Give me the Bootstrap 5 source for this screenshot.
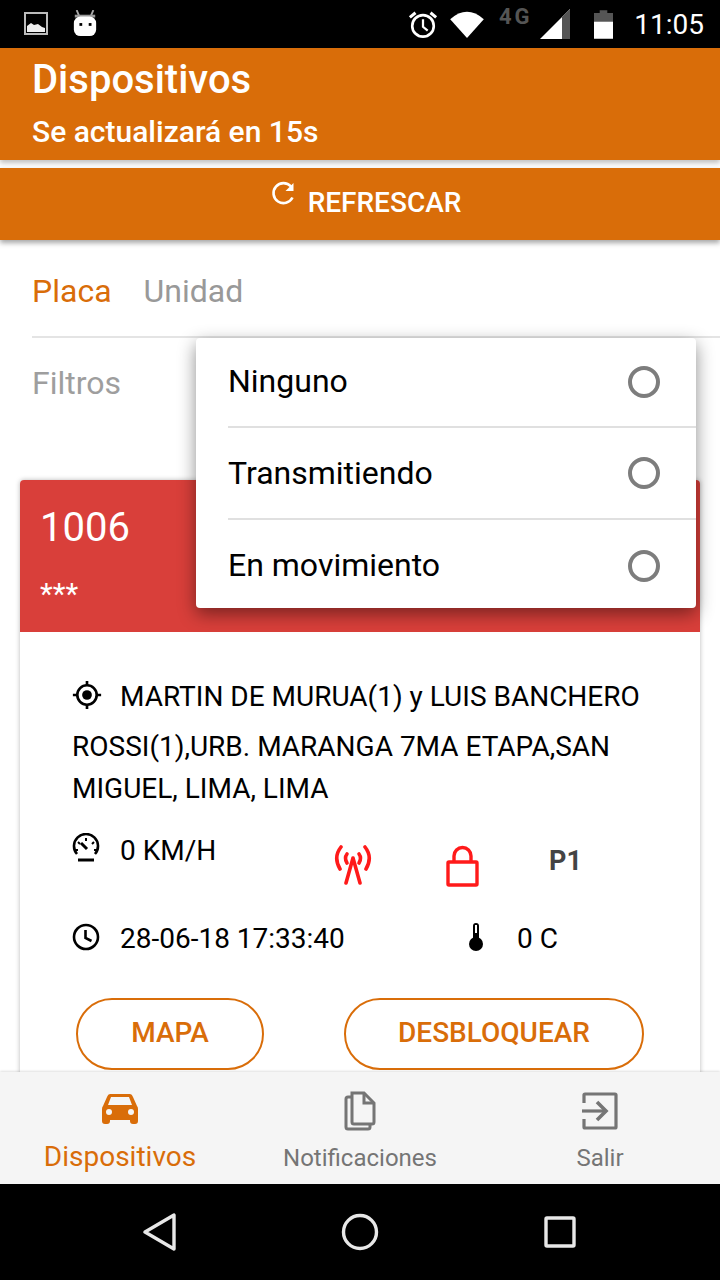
<!DOCTYPE html>
<html lang="es">
<head>
<meta charset="utf-8">
<title>Dispositivos</title>
<link href="https://cdn.jsdelivr.net/npm/bootstrap@5.3.0/dist/css/bootstrap.min.css" rel="stylesheet">
<style>
html,body{height:1280px;width:720px;overflow:hidden}
body{font-family:Roboto,sans-serif;background:#fff;color:#000}
.shell{height:1280px;position:relative}
.statusbar{height:48px;background:#000;color:#fff;padding:0 16px 0 24px;flex:none}
.st-droid{margin-left:24px}
.st-wifi{margin-left:12px}
.st-net{margin-left:15px}
.st-batt{margin-left:23px}
.clock{font-size:28px;line-height:48px;margin-left:21px;padding-top:2px}
.apphead{height:112px;background:#d96d09;color:#fff;padding:10px 32px 0;flex:none;box-shadow:0 3px 5px rgba(0,0,0,.25);position:relative;z-index:2}
.apphead h1{font-size:40px;line-height:44px;font-weight:500;margin:0 0 11px}
.apphead p{font-size:30px;line-height:38px;font-weight:500;margin:0}
.refresh{height:72px;margin-top:8px;background:#d96d09;color:#fff;font-size:28px;font-weight:500;flex:none;box-shadow:0 3px 5px rgba(0,0,0,.35);position:relative;z-index:2;border:0;border-radius:0;width:100%;padding:0}
.refresh:hover,.refresh:active{background:#d96d09;color:#fff}
.refresh span{margin-top:-2px}
.refresh-ico{margin:-20px 11px 0 12px}
.content{min-height:0;overflow:hidden;position:relative;background:#fff}
.segs{margin-left:32px;height:98px;border-bottom:2px solid #e4e4e4;gap:32px;font-size:32px;padding-top:6px}
.seg-on{color:#d96d09}
.seg-off{color:#999}
.filter-row{height:142px;padding:27px 0 0 32px;font-size:32px;color:#9e9e9e;line-height:36px}
.devcard{margin:0 20px;background:#fff;box-shadow:0 0 5px rgba(0,0,0,.28);border-radius:4px 4px 0 0;height:700px}
.devhead{height:152px;background:#d93f3a;color:#fff;border-radius:4px 4px 0 0;padding:24px 20px 0}
.devhead h2{font-size:40px;line-height:48px;font-weight:400;margin:0 0 28px}
.devhead p{font-size:29.5px;line-height:28px;margin:0}
.devbody{padding:44px 52px 0;font-size:28px;line-height:42px}
.addr{margin:0 0 17px}
.addr-first{line-height:42px;margin-bottom:8px;display:block}
.addr svg{margin:-7px 18px 0 0;vertical-align:middle}
.infor{height:82px}
.infor2{height:60px}
.ico-gap{width:48px;flex:none}
.c-speed{width:263px;flex:none;padding-top:3px}
.c-speed svg{margin-top:-6px}
.c-ant{width:112px;flex:none;padding-top:18px}
.c-ant svg{margin-left:-1px}
.c-lock{width:103px;flex:none;padding-top:18px}
.c-lock svg{margin-left:-1px}
.p1{font-weight:700;color:#444;font-size:27px;line-height:42px;padding-top:13px;margin-left:-1px}
.c-date{width:396px;flex:none}
.c-date svg{margin-top:-4px}
.thermo{margin:-4px 33px 0 0}
.actions{margin:29px -48px 0 4px;gap:80px}
.pill{height:72px;border:2px solid #d96d09;border-radius:36px;background:#fff;color:#d96d09;font-size:28px;font-weight:500;padding:0 0 2px;display:flex;align-items:center;justify-content:center}
.pill:hover{background:#fff;color:#d96d09;border-color:#d96d09}
.p-map{width:188px}
.p-unlock{width:300px}
.popmenu{position:absolute;left:196px;top:98px;width:500px;height:270px;background:#fff;border-radius:4px;box-shadow:0 6px 18px rgba(0,0,0,.45);z-index:5;padding:0 0 0 32px}
.popitem{height:92px;font-size:32px;border-bottom:2px solid #e0e0e0;padding-right:36px}
.popitem:first-child{height:90px}
.popitem:first-child>span:first-child,.popitem:last-child>span:first-child{margin-top:-2px}
.popitem:last-child{border:0;height:88px;padding-top:4px}
.ring{width:32px;height:32px;border:4px solid #7d7d7d;border-radius:50%;display:block}
.tabbar{height:112px;background:#f5f5f5;flex:none;position:relative;z-index:3;box-shadow:0 -1px 2px rgba(0,0,0,.12)}
.tabitem{width:240px;color:#757575;font-size:24px;line-height:30px;height:112px}
.tabitem span{margin-top:1px}
.tabitem.on{color:#d96d09;font-size:28px}
.tabitem.on span{margin-top:0}
.tabitem svg{display:block}
.tab-ico{height:70px}
.navbarx{height:96px;background:#000;flex:none}
.nav-side{width:320px}
.nav-mid{width:80px}
</style>
</head>
<body>
<div class="shell d-flex flex-column">
  <div class="statusbar d-flex align-items-center justify-content-between">
    <div class="d-flex align-items-center">
      <svg width="24" height="24" viewBox="0 0 24 24"><rect x="1" y="1" width="22" height="21" fill="none" stroke="#bbb" stroke-width="2"/><path d="M3 20V14l4-3 3 2 4-1 4 3 3 1v4z" fill="#eee"/></svg>
      <svg class="st-droid" width="26" height="28" viewBox="0 0 28 30"><path d="M5 0l3 7M23 0l-3 7" stroke="#aaa" stroke-width="2"/><path d="M3 5h22v3H3z" fill="#999"/><rect x="2" y="7" width="24" height="21" rx="7" fill="#fff"/><rect x="8" y="14" width="3" height="3" fill="#000"/><rect x="18" y="14" width="3" height="3" fill="#000"/></svg>
    </div>
    <div class="d-flex align-items-center">
      <svg width="30" height="30" viewBox="0 0 32 32" fill="none" stroke="#fff"><circle cx="16" cy="18" r="11.5" stroke-width="2.8"/><path d="M16 11v8l5 4" stroke-width="2.4"/><path d="M2 9l6-5M30 9l-6-5" stroke-width="3.2"/></svg>
      <svg class="st-wifi" width="34" height="28" viewBox="0 0 36 30"><path d="M0 10Q18-6 36 10L18 30z" fill="#fff"/></svg>
      <svg class="st-net" width="72" height="40" viewBox="0 0 72 40"><text x="0" y="20" font-family="Roboto,sans-serif" font-size="22" font-weight="700" letter-spacing="3" fill="#555">4G</text><path d="M41 35L71 5v30z" fill="#fff"/><path d="M63 13L71 5v30h-8z" fill="#555"/></svg>
      <svg class="st-batt" width="19" height="29" viewBox="0 0 20 30"><path d="M6 0h8v3h6v9H0V3h6z" fill="#555"/><rect y="12" width="20" height="18" fill="#fff"/></svg>
      <span class="clock">11:05</span>
    </div>
  </div>
  <header class="apphead">
    <h1>Dispositivos</h1>
    <p>Se actualizará en 15s</p>
  </header>
  <button class="btn refresh d-flex align-items-center justify-content-center" type="button">
    <svg class="refresh-ico" width="26" height="26" viewBox="0 0 26 26" fill="none" stroke="#fff" stroke-width="2.6"><path d="M21.5 16.5A10 10 0 1 1 20 5.5"/><path d="M22.5 2v8h-8z" fill="#fff" stroke="none"/></svg>
    <span>REFRESCAR</span>
  </button>
  <main class="content flex-grow-1">
    <div class="segs d-flex align-items-center">
      <span class="seg-on">Placa</span><span class="seg-off">Unidad</span>
    </div>
    <div class="filter-row">Filtros</div>
    <article class="devcard">
      <div class="devhead">
        <h2>1006</h2>
        <p>***</p>
      </div>
      <div class="devbody">
        <p class="addr">
          <span class="addr-first"><svg width="30" height="30" viewBox="0 0 34 34" fill="none" stroke="#000"><circle cx="17" cy="17" r="11" stroke-width="3"/><circle cx="17" cy="17" r="5.5" fill="#000" stroke="none"/><path d="M17 1v5M17 28v5M1 17h5M28 17h5" stroke-width="3"/></svg>MARTIN DE MURUA(1) y LUIS BANCHERO</span>
          ROSSI(1),URB. MARANGA 7MA ETAPA,SAN MIGUEL, LIMA, LIMA
        </p>
        <div class="infor d-flex align-items-start">
          <div class="c-speed d-flex align-items-center">
            <span class="ico-gap"><svg class="d-block" width="28" height="30" viewBox="0 0 28 30" fill="none" stroke="#000" stroke-width="2.6"><path d="M5 21A12 12 0 1 1 23 21"/><path d="M3 17h3M25 17h-3M14 5v3M6 9l2 2M22 9l-2 2" stroke-width="2"/><path d="M9 10l6 6" stroke-width="3"/><path d="M6 27h16" stroke-width="3"/></svg></span>
            <span>0 KM/H</span>
          </div>
          <div class="c-ant">
            <svg class="d-block" width="38" height="40" viewBox="0 0 38 40" fill="none" stroke="#ff1a1a" stroke-width="3.6" stroke-linecap="round"><path d="M7 2Q-1 12 6 24M31 2Q39 12 32 24"/><path d="M13 9Q10 13 13 18M25 9Q28 13 25 18"/><path d="M19 13L12 38M19 13L26 38"/></svg>
          </div>
          <div class="c-lock">
            <svg class="d-block" width="34" height="42" viewBox="0 0 34 42" fill="none" stroke="#ff1a1a" stroke-width="3.4"><rect x="2" y="17" width="29" height="23" rx="1"/><path d="M8 17V11a8.5 8.5 0 0 1 17 0v6"/></svg>
          </div>
          <div class="p1">P1</div>
        </div>
        <div class="infor2 d-flex align-items-center">
          <div class="c-date d-flex align-items-center">
            <span class="ico-gap"><svg class="d-block" width="28" height="28" viewBox="0 0 28 28" fill="none" stroke="#000"><circle cx="14" cy="14" r="12" stroke-width="2.6"/><path d="M13.5 7v8l6 3" stroke-width="2.6"/></svg></span>
            <span>28-06-18 17:33:40</span>
          </div>
          <span class="d-flex align-items-center"><svg class="d-block thermo" width="16" height="30" viewBox="0 0 16 30"><rect x="5" y="1" width="6" height="20" rx="3" fill="#000"/><circle cx="8" cy="22" r="7" fill="#000"/><rect x="7" y="3" width="2" height="8" fill="#fff"/></svg>0 C</span>
        </div>
        <div class="actions d-flex">
          <button class="btn pill p-map" type="button">MAPA</button>
          <button class="btn pill p-unlock" type="button">DESBLOQUEAR</button>
        </div>
      </div>
    </article>
    <div class="popmenu">
      <div class="popitem d-flex align-items-center justify-content-between"><span>Ninguno</span><span class="ring"></span></div>
      <div class="popitem d-flex align-items-center justify-content-between"><span>Transmitiendo</span><span class="ring"></span></div>
      <div class="popitem d-flex align-items-center justify-content-between"><span>En movimiento</span><span class="ring"></span></div>
    </div>
  </main>
  <nav class="tabbar d-flex">
    <div class="tabitem on d-flex flex-column align-items-center">
      <div class="tab-ico d-flex align-items-center pt-1"><svg width="36" height="30" viewBox="0 0 36 30"><path d="M8 0h20q2 0 3 3l4 9q1 1 1 3v12q0 3-3 3h-2q-3 0-3-3v-1H8v1q0 3-3 3H3q-3 0-3-3V15q0-2 1-3L5 3q1-3 3-3zM6 11h24l-3-8H9z" fill="#d96d09" fill-rule="evenodd"/><circle cx="7" cy="18" r="3" fill="#f5f5f5"/><circle cx="29" cy="18" r="3" fill="#f5f5f5"/></svg></div>
      <span>Dispositivos</span>
    </div>
    <div class="tabitem d-flex flex-column align-items-center">
      <div class="tab-ico d-flex align-items-center pt-2"><svg width="32" height="40" viewBox="0 0 32 40" fill="none" stroke="#757575" stroke-width="3"><path d="M8 2h12l10 10v19q0 2-2 2H10q-2 0-2-2z"/><path d="M20 2v10h10"/><path d="M8 6H4q-2 0-2 2v28q0 2 2 2h20q2 0 2-2v-3"/></svg></div>
      <span>Notificaciones</span>
    </div>
    <div class="tabitem d-flex flex-column align-items-center">
      <div class="tab-ico d-flex align-items-center pt-2"><svg width="36" height="38" viewBox="0 0 36 38" fill="none" stroke="#757575" stroke-width="3.2"><path d="M2 11V3q0-1 1-1h30q1 0 1 1v32q0 1-1 1H3q-1 0-1-1v-8"/><path d="M0 19h24"/><path d="M15 10l9 9-9 9" stroke-width="3.6"/></svg></div>
      <span>Salir</span>
    </div>
  </nav>
  <div class="navbarx d-flex align-items-center">
    <div class="nav-side d-flex justify-content-center"><svg width="34" height="38" viewBox="0 0 34 38" fill="none" stroke="#e8e8e8" stroke-width="3.4" stroke-linejoin="round"><path d="M31 2v34L2 19z"/></svg></div>
    <div class="nav-mid d-flex justify-content-center"><svg width="38" height="38" viewBox="0 0 38 38" fill="none" stroke="#e8e8e8" stroke-width="3.4"><circle cx="19" cy="19" r="16.5"/></svg></div>
    <div class="nav-side d-flex justify-content-center"><svg width="32" height="32" viewBox="0 0 32 32" fill="none" stroke="#e8e8e8" stroke-width="3.4"><rect x="2" y="2" width="28" height="28" rx="1"/></svg></div>
  </div>
</div>
<script src="https://cdn.jsdelivr.net/npm/bootstrap@5.3.0/dist/js/bootstrap.bundle.min.js"></script>
</body>
</html>
